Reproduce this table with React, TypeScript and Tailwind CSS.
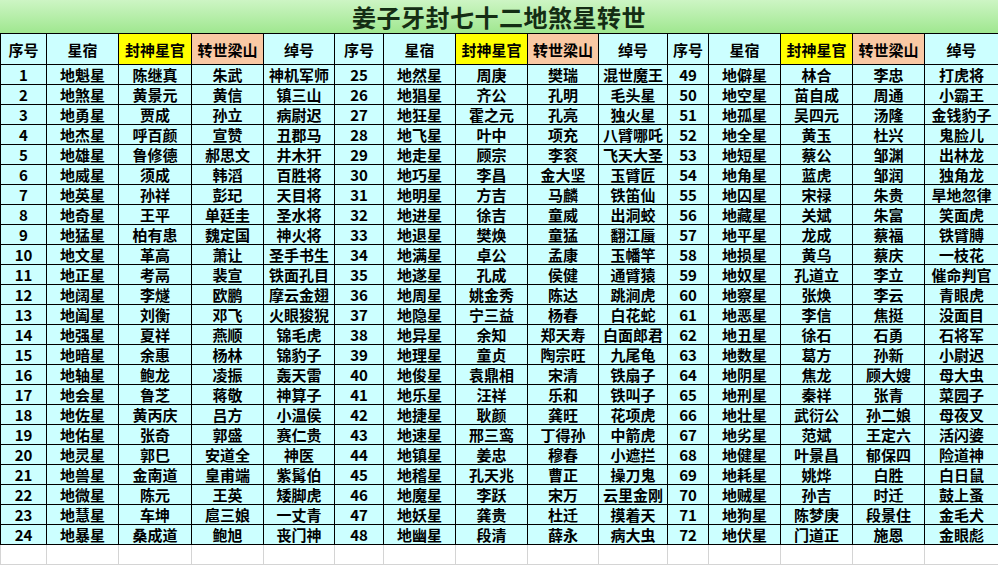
const g1 = [
  ["1", "地魁星", "陈继真", "朱武", "神机军师"],
  ["2", "地煞星", "黄景元", "黄信", "镇三山"],
  ["3", "地勇星", "贾成", "孙立", "病尉迟"],
  ["4", "地杰星", "呼百颜", "宣赞", "丑郡马"],
  ["5", "地雄星", "鲁修德", "郝思文", "井木犴"],
  ["6", "地威星", "须成", "韩滔", "百胜将"],
  ["7", "地英星", "孙祥", "彭玘", "天目将"],
  ["8", "地奇星", "王平", "单廷圭", "圣水将"],
  ["9", "地猛星", "柏有患", "魏定国", "神火将"],
  ["10", "地文星", "革高", "萧让", "圣手书生"],
  ["11", "地正星", "考鬲", "裴宣", "铁面孔目"],
  ["12", "地阔星", "李燧", "欧鹏", "摩云金翅"],
  ["13", "地阖星", "刘衡", "邓飞", "火眼狻猊"],
  ["14", "地强星", "夏祥", "燕顺", "锦毛虎"],
  ["15", "地暗星", "余惠", "杨林", "锦豹子"],
  ["16", "地轴星", "鲍龙", "凌振", "轰天雷"],
  ["17", "地会星", "鲁芝", "蒋敬", "神算子"],
  ["18", "地佐星", "黄丙庆", "吕方", "小温侯"],
  ["19", "地佑星", "张奇", "郭盛", "赛仁贵"],
  ["20", "地灵星", "郭巳", "安道全", "神医"],
  ["21", "地兽星", "金南道", "皇甫端", "紫髯伯"],
  ["22", "地微星", "陈元", "王英", "矮脚虎"],
  ["23", "地慧星", "车坤", "扈三娘", "一丈青"],
  ["24", "地暴星", "桑成道", "鲍旭", "丧门神"],
];

const g2 = [
  ["25", "地然星", "周庚", "樊瑞", "混世魔王"],
  ["26", "地猖星", "齐公", "孔明", "毛头星"],
  ["27", "地狂星", "霍之元", "孔亮", "独火星"],
  ["28", "地飞星", "叶中", "项充", "八臂哪吒"],
  ["29", "地走星", "顾宗", "李衮", "飞天大圣"],
  ["30", "地巧星", "李昌", "金大坚", "玉臂匠"],
  ["31", "地明星", "方吉", "马麟", "铁笛仙"],
  ["32", "地进星", "徐吉", "童威", "出洞蛟"],
  ["33", "地退星", "樊焕", "童猛", "翻江蜃"],
  ["34", "地满星", "卓公", "孟康", "玉幡竿"],
  ["35", "地遂星", "孔成", "侯健", "通臂猿"],
  ["36", "地周星", "姚金秀", "陈达", "跳涧虎"],
  ["37", "地隐星", "宁三益", "杨春", "白花蛇"],
  ["38", "地异星", "余知", "郑天寿", "白面郎君"],
  ["39", "地理星", "童贞", "陶宗旺", "九尾龟"],
  ["40", "地俊星", "袁鼎相", "宋清", "铁扇子"],
  ["41", "地乐星", "汪祥", "乐和", "铁叫子"],
  ["42", "地捷星", "耿颜", "龚旺", "花项虎"],
  ["43", "地速星", "邢三鸾", "丁得孙", "中箭虎"],
  ["44", "地镇星", "姜忠", "穆春", "小遮拦"],
  ["45", "地稽星", "孔天兆", "曹正", "操刀鬼"],
  ["46", "地魔星", "李跃", "宋万", "云里金刚"],
  ["47", "地妖星", "龚贵", "杜迁", "摸着天"],
  ["48", "地幽星", "段清", "薛永", "病大虫"],
];

const g3 = [
  ["49", "地僻星", "林合", "李忠", "打虎将"],
  ["50", "地空星", "苗自成", "周通", "小霸王"],
  ["51", "地孤星", "吴四元", "汤隆", "金钱豹子"],
  ["52", "地全星", "黄玉", "杜兴", "鬼脸儿"],
  ["53", "地短星", "蔡公", "邹渊", "出林龙"],
  ["54", "地角星", "蓝虎", "邹润", "独角龙"],
  ["55", "地囚星", "宋禄", "朱贵", "旱地忽律"],
  ["56", "地藏星", "关斌", "朱富", "笑面虎"],
  ["57", "地平星", "龙成", "蔡福", "铁臂膊"],
  ["58", "地损星", "黄乌", "蔡庆", "一枝花"],
  ["59", "地奴星", "孔道立", "李立", "催命判官"],
  ["60", "地察星", "张焕", "李云", "青眼虎"],
  ["61", "地恶星", "李信", "焦挺", "没面目"],
  ["62", "地丑星", "徐石", "石勇", "石将军"],
  ["63", "地数星", "葛方", "孙新", "小尉迟"],
  ["64", "地阴星", "焦龙", "顾大嫂", "母大虫"],
  ["65", "地刑星", "秦祥", "张青", "菜园子"],
  ["66", "地壮星", "武衍公", "孙二娘", "母夜叉"],
  ["67", "地劣星", "范斌", "王定六", "活闪婆"],
  ["68", "地健星", "叶景昌", "郁保四", "险道神"],
  ["69", "地耗星", "姚烨", "白胜", "白日鼠"],
  ["70", "地贼星", "孙吉", "时迁", "鼓上蚤"],
  ["71", "地狗星", "陈梦庚", "段景住", "金毛犬"],
  ["72", "地伏星", "门道正", "施恩", "金眼彪"],
];

const widths = [46, 72, 73, 72, 71, 49, 72, 72, 71, 69, 41, 72, 72, 72, 74];

const HeaderGroup = () => (
  <>
    <th className="border border-black bg-[#ccffff]">序号</th>
    <th className="border border-black bg-[#ccffff]">星宿</th>
    <th className="border border-black bg-[#ffff00]">封神星官</th>
    <th className="border border-black bg-[#f9c9a4]">转世梁山</th>
    <th className="border border-black bg-[#ccffff]">绰号</th>
  </>
);

export default function App() {
  return (
    <div className="w-[998px] h-[565px] overflow-hidden bg-white font-['Noto_Sans_CJK_SC',sans-serif] text-black">
      <div className="h-[33px] flex items-center justify-center bg-gradient-to-b from-[#cdf5c4] to-[#9fe78f]">
        <h1 className="text-[24px] font-bold leading-none tracking-[0.5px] text-[#142d14]">
          姜子牙封七十二地煞星转世
        </h1>
      </div>
      <table className="w-[998px] table-fixed border-collapse text-center text-[15px] font-bold leading-[19px]">
        <colgroup>
          {widths.map((w, i) => (
            <col key={i} style={{ width: w }} />
          ))}
        </colgroup>
        <thead>
          <tr className="h-[31px]">
            <HeaderGroup />
            <HeaderGroup />
            <HeaderGroup />
          </tr>
        </thead>
        <tbody>
          {g1.map((_, i) => (
            <tr key={i} className="h-[20px]">
              {[g1[i], g2[i], g3[i]].flatMap((row, gi) =>
                row.map((cell, ci) => (
                  <td
                    key={gi + "-" + ci}
                    className="border border-black bg-[#ccffff] p-0 whitespace-nowrap"
                  >
                    {cell}
                  </td>
                ))
              )}
            </tr>
          ))}
          <tr className="h-[20px] bg-[#ffffff]">
            {widths.map((_, i) => (
              <td
                key={i}
                className="border-x border-b border-x-[#d4d4d4] border-b-[#d4d4d4] bg-[#ffffff] p-0"
              />
            ))}
          </tr>
        </tbody>
      </table>
    </div>
  );
}
